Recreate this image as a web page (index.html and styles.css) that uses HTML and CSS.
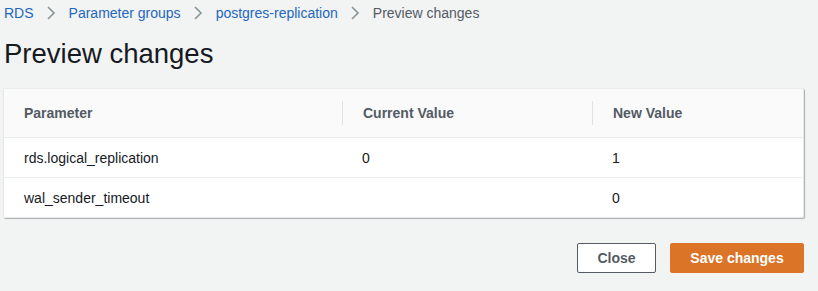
FILE: index.html
```html
<!DOCTYPE html>
<html lang="en">
<head>
    <meta charset="UTF-8">
    <title>Preview changes</title>
    <link rel="stylesheet" href="styles.css">
</head>
<body>

<nav class="crumbs">
    <a href="#">RDS</a>
    <svg class="sep" width="10" height="14" viewBox="0 0 10 14"><path d="M2 1l6 6-6 6" fill="none" stroke="#879596" stroke-width="1.6"/></svg>
    <a href="#">Parameter groups</a>
    <svg class="sep" width="10" height="14" viewBox="0 0 10 14"><path d="M2 1l6 6-6 6" fill="none" stroke="#879596" stroke-width="1.6"/></svg>
    <a href="#">postgres-replication</a>
    <svg class="sep" width="10" height="14" viewBox="0 0 10 14"><path d="M2 1l6 6-6 6" fill="none" stroke="#879596" stroke-width="1.6"/></svg>
    <span class="current">Preview changes</span>
</nav>

<h1 class="title">Preview changes</h1>

<div class="card">
    <table class="changes">
        <thead>
            <tr>
                <th class="col-param"><span>Parameter</span></th>
                <th class="col-cur"><span>Current Value</span></th>
                <th class="col-new"><span>New Value</span></th>
            </tr>
        </thead>
        <tbody>
            <tr>
                <td>rds.logical_replication</td>
                <td>0</td>
                <td>1</td>
            </tr>
            <tr>
                <td>wal_sender_timeout</td>
                <td></td>
                <td>0</td>
            </tr>
        </tbody>
    </table>
</div>

<div class="actions">
    <button class="btn btn-close">Close</button>
    <button class="btn btn-save">Save changes</button>
</div>

</body>
</html>
```

FILE: styles.css
```css
body {
    font-family: "Liberation Sans", Arial, sans-serif;
    background-color: #f2f3f3;
    color: #16191f;
    margin: 0;
    padding: 0 14px 0 3px;
}
.crumbs {
    display: flex;
    align-items: center;
    height: 26px;
    padding-left: 1px;
    font-size: 14px;
}
.crumbs a {
    color: #2268bd;
    text-decoration: none;
}
.crumbs .sep {
    margin: 0 13px 0 12px;
}
.crumbs .current {
    color: #545b64;
}
.title {
    font-size: 27.5px;
    font-weight: normal;
    margin: 11px 0 0 1px;
    line-height: 34px;
    height: 51px;
}
.card {
    background: white;
    border: 1px solid #e5e6e6;
    border-top-color: #eaeded;
    box-shadow: 1px 1px 1px rgba(0, 22, 40, 0.3);
    border-radius: 2px;
}
.changes {
    width: 100%;
    border-collapse: collapse;
    font-size: 14px;
}
.changes th {
    background: #fafafa;
    color: #545b64;
    text-align: left;
    font-weight: bold;
    height: 48px;
    padding: 0;
    border-bottom: 1px solid #eaeded;
}
.changes th span {
    display: block;
    padding-left: 20px;
    line-height: 24px;
}
.changes th.col-cur span, .changes th.col-new span {
    border-left: 1px solid #e1e4e4;
}
.col-param {
    width: 338px;
}
.col-cur {
    width: 250px;
}
.changes td {
    height: 39px;
    padding: 0 0 0 20px;
    border-bottom: 1px solid #eaeded;
}
.changes tr:last-child td {
    border-bottom: none;
}
.actions {
    display: flex;
    justify-content: flex-end;
    gap: 14px;
    margin-top: 25px;
}
.btn {
    font-family: inherit;
    font-size: 14px;
    font-weight: bold;
    height: 30px;
    border-radius: 2px;
    cursor: pointer;
}
.btn-close {
    width: 79px;
    background: white;
    color: #545b64;
    border: 1px solid #545b64;
}
.btn-save {
    width: 134px;
    background: #dc7427;
    color: white;
    border: 1px solid #dc7427;
}
```
